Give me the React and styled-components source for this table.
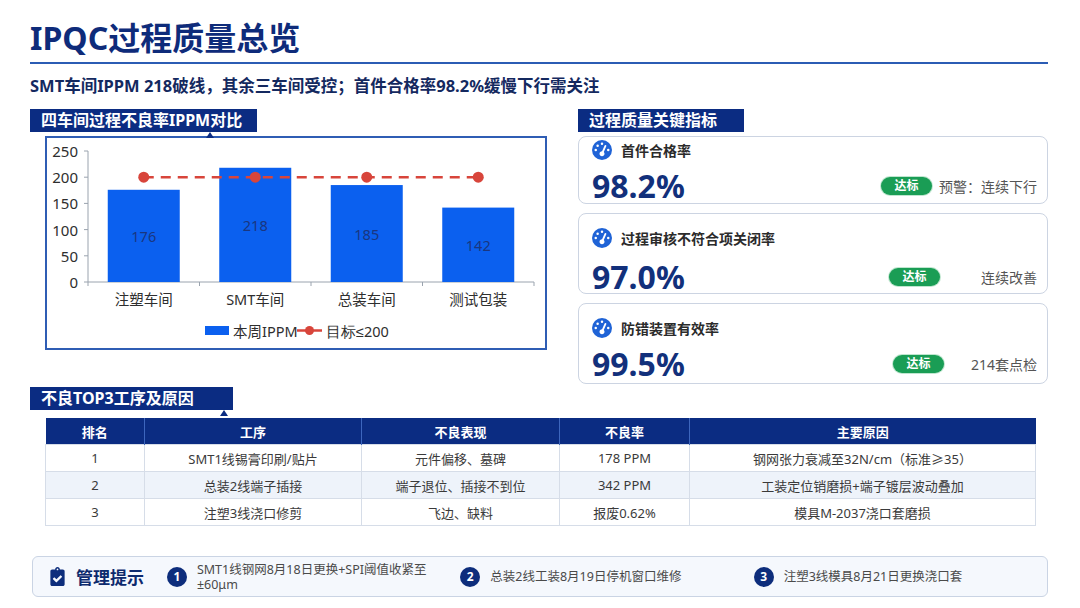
import styled, { createGlobalStyle } from "styled-components";
import { FaClipboardCheck } from "react-icons/fa";
import { FaGaugeHigh } from "react-icons/fa6";

const GlobalStyle = createGlobalStyle`
  html, body {
    margin: 0;
    padding: 0;
    background: #fff;
  }
  body {
    font-family: "Noto Sans", "Noto Sans CJK SC", sans-serif;
    color: #333;
  }
`;

const Page = styled.div`
  width: 1080px;
  height: 608px;
  box-sizing: border-box;
  padding: 18px 32px 0 30px;
  overflow: hidden;
`;

const Title = styled.h1`
  margin: 0;
  font-size: 32px;
  line-height: 40px;
  font-weight: 700;
  color: #0e2b7a;
`;

const Divider = styled.div`
  height: 2px;
  margin-top: 4px;
  background: #2b5cb4;
`;

const Subtitle = styled.p`
  margin: 11px 0 0;
  font-size: 16.5px;
  line-height: 22px;
  font-weight: 700;
  color: #14295f;
`;

const Main = styled.div`
  display: grid;
  grid-template-columns: 517px 470px;
  column-gap: 31px;
  margin-top: 12px;
`;

const Column = styled.div`
  display: flex;
  flex-direction: column;
`;

const SectionTitle = styled.div`
  position: relative;
  z-index: 1;
  box-sizing: border-box;
  width: ${(p) => p.$w}px;
  height: 23px;
  padding-left: 11px;
  background: #0b2c82;
  color: #fff;
  font-size: 16px;
  line-height: 23px;
  font-weight: 700;
  &::after {
    content: "";
    position: absolute;
    right: ${(p) => p.$notchRight || 5}px;
    bottom: -6px;
    border-left: 4px solid transparent;
    border-right: 4px solid transparent;
    border-bottom: 6px solid #0b2c82;
    display: ${(p) => (p.$notch ? "block" : "none")};
  }
`;

const ChartBox = styled.div`
  box-sizing: border-box;
  width: 502px;
  height: 214px;
  margin: 4px 0 0 15px;
  border: 2px solid #2f5db4;
`;

const ChartSvg = styled.svg`
  display: block;
  font-family: inherit;
  text {
    font-size: 14.5px;
    fill: #2e2e2e;
  }
  .axis {
    font-size: 15px;
  }
  .val {
    fill: #1a3680;
  }
`;

const Cards = styled.div`
  display: flex;
  flex-direction: column;
  gap: 9px;
  margin-top: 4px;
`;

const Card = styled.div`
  box-sizing: border-box;
  height: ${(p) => p.$h}px;
  padding: ${(p) => p.$pt}px 10px 0 13px;
  border: 1.5px solid #ccd4e2;
  border-radius: 8px;
  display: flex;
  flex-direction: column;
`;

const CardHead = styled.div`
  display: flex;
  align-items: center;
  gap: 9px;
  height: 20px;
  font-size: 14px;
  font-weight: 700;
  color: #2b2b2b;
  svg {
    color: #1f63d6;
  }
`;

const ValueRow = styled.div`
  display: flex;
  align-items: center;
  margin-top: ${(p) => p.$mt}px;
`;

const Value = styled.div`
  flex: 1;
  font-size: 32px;
  line-height: 36px;
  font-weight: 700;
  color: #12307b;
`;

const Badge = styled.span`
  width: 51px;
  height: 18px;
  border-radius: 9px;
  background: #1a9d55;
  box-shadow: 0 0 0 1px #bfe6cf;
  color: #fff;
  font-size: 12px;
  line-height: 18px;
  font-weight: 700;
  text-align: center;
`;

const Note = styled.span`
  width: ${(p) => p.$w}px;
  text-align: right;
  font-size: 14px;
  color: #555;
`;

const TableSection = styled.div`
  margin-top: 3px;
`;

const Table = styled.table`
  width: 990px;
  margin: 8px 0 0 15px;
  border-collapse: collapse;
  table-layout: fixed;
  font-size: 13px;
  th {
    height: 26px;
    padding: 0;
    background: #0b2c82;
    color: #fff;
    font-weight: 700;
    border-left: 1px solid #3d66bd;
  }
  th:first-child {
    border-left: none;
  }
  td {
    height: 26px;
    padding: 0;
    text-align: center;
    color: #3a3a3a;
    border: 1px solid #d6dde8;
  }
  tbody tr:nth-child(2) td {
    background: #eef3fa;
  }
`;

const TipBar = styled.div`
  box-sizing: border-box;
  height: 41px;
  margin: 30px 0 0 2px;
  padding-left: 15px;
  border: 1px solid #cad4e4;
  border-radius: 6px;
  background: #f5f8fd;
  display: flex;
  align-items: center;
`;

const TipLead = styled.div`
  width: 120px;
  display: flex;
  align-items: center;
  gap: 9px;
  font-size: 17px;
  font-weight: 700;
  color: #0d2a6e;
  svg {
    color: #0d2d7c;
  }
`;

const Tip = styled.div`
  width: 296px;
  display: flex;
  align-items: center;
  gap: 10px;
`;

const TipNum = styled.span`
  flex: none;
  width: 20px;
  height: 20px;
  border-radius: 50%;
  background: #0d2d7c;
  color: #fff;
  font-size: 12px;
  font-weight: 700;
  line-height: 20px;
  text-align: center;
`;

const TipText = styled.span`
  font-size: 12.5px;
  line-height: 15px;
  color: #4a4a4a;
`;

const chartData = [
  { name: "注塑车间", v: 176 },
  { name: "SMT车间", v: 218 },
  { name: "总装车间", v: 185 },
  { name: "测试包装", v: 142 },
];

const X0 = 41;
const X1 = 487;
const Y0 = 144;
const K = 131 / 250;
const CW = (X1 - X0) / 4;
const BAR = 72;

const Chart = () => {
  const cx = (i) => X0 + i * CW + CW / 2;
  const ty = Y0 - 200 * K;
  return (
    <ChartSvg width="498" height="210" viewBox="0 0 498 210">
      {[0, 50, 100, 150, 200, 250].map((t) => (
        <g key={t}>
          <line x1={37} x2={X0} y1={Y0 - t * K} y2={Y0 - t * K} stroke="#9aa3ae" />
          <text className="axis" x={31} y={Y0 - t * K} textAnchor="end" dominantBaseline="central">
            {t}
          </text>
        </g>
      ))}
      <line x1={X0} x2={X0} y1={Y0} y2={Y0 - 250 * K} stroke="#9aa3ae" />
      <line x1={X0} x2={X1} y1={Y0} y2={Y0} stroke="#9aa3ae" />
      {[0, 1, 2, 3, 4].map((i) => (
        <line key={i} x1={X0 + i * CW} x2={X0 + i * CW} y1={Y0} y2={Y0 + 4} stroke="#9aa3ae" />
      ))}
      {chartData.map((d, i) => (
        <g key={d.name}>
          <rect x={cx(i) - BAR / 2} y={Y0 - d.v * K} width={BAR} height={d.v * K} fill="#0b60ef" />
          <text className="val" x={cx(i)} y={Y0 - (d.v * K) / 2} textAnchor="middle" dominantBaseline="central">
            {d.v}
          </text>
          <text x={cx(i)} y={161} textAnchor="middle" dominantBaseline="central">
            {d.name}
          </text>
        </g>
      ))}
      <line x1={cx(0)} x2={cx(3)} y1={ty} y2={ty} stroke="#d8453b" strokeWidth="2.5" strokeDasharray="10 7" />
      {chartData.map((d, i) => (
        <circle key={d.name} cx={cx(i)} cy={ty} r="5.5" fill="#d8453b" />
      ))}
      <rect x={158} y={188} width={24} height={9} fill="#0b60ef" />
      <text x={186} y={192.5} dominantBaseline="central">本周IPPM</text>
      <line x1={250} x2={275} y1={192.5} y2={192.5} stroke="#d8453b" strokeWidth="2.5" />
      <circle cx={262.5} cy={192.5} r="4.5" fill="#d8453b" />
      <text x={279} y={192.5} dominantBaseline="central" style={{ fontFamily: '"Noto Sans", sans-serif' }}>
        目标≤200
      </text>
    </ChartSvg>
  );
};

const kpis = [
  { label: "首件合格率", value: "98.2%", note: "预警：连续下行", noteW: 105, h: 68, pt: 3, mt: 8 },
  { label: "过程审核不符合项关闭率", value: "97.0%", note: "连续改善", noteW: 97, h: 81, pt: 14, mt: 11 },
  { label: "防错装置有效率", value: "99.5%", note: "214套点检", noteW: 93, h: 81, pt: 14, mt: 8 },
];

const rows = [
  ["1", "SMT1线锡膏印刷/贴片", "元件偏移、墓碑", "178 PPM", "钢网张力衰减至32N/cm（标准≥35）"],
  ["2", "总装2线端子插接", "端子退位、插接不到位", "342 PPM", "工装定位销磨损+端子镀层波动叠加"],
  ["3", "注塑3线浇口修剪", "飞边、缺料", "报废0.62%", "模具M-2037浇口套磨损"],
];

const App = () => {
  return (
    <Page>
      <GlobalStyle />
      <Title>IPQC过程质量总览</Title>
      <Divider />
      <Subtitle>SMT车间IPPM 218破线，其余三车间受控；首件合格率98.2%缓慢下行需关注</Subtitle>
      <Main>
        <Column>
          <SectionTitle $w={227} $notch $notchRight={43}>四车间过程不良率IPPM对比</SectionTitle>
          <ChartBox>
            <Chart />
          </ChartBox>
        </Column>
        <Column>
          <SectionTitle $w={166}>过程质量关键指标</SectionTitle>
          <Cards>
            {kpis.map((k) => (
              <Card key={k.label} $h={k.h} $pt={k.pt}>
                <CardHead>
                  <FaGaugeHigh size={20} />
                  {k.label}
                </CardHead>
                <ValueRow $mt={k.mt}>
                  <Value>{k.value}</Value>
                  <Badge>达标</Badge>
                  <Note $w={k.noteW}>{k.note}</Note>
                </ValueRow>
              </Card>
            ))}
          </Cards>
        </Column>
      </Main>
      <TableSection>
        <SectionTitle $w={203} $notch>不良TOP3工序及原因</SectionTitle>
        <Table>
          <colgroup>
            <col style={{ width: 99 }} />
            <col style={{ width: 217 }} />
            <col style={{ width: 198 }} />
            <col style={{ width: 130 }} />
            <col style={{ width: 346 }} />
          </colgroup>
          <thead>
            <tr>
              <th>排名</th>
              <th>工序</th>
              <th>不良表现</th>
              <th>不良率</th>
              <th>主要原因</th>
            </tr>
          </thead>
          <tbody>
            {rows.map((r) => (
              <tr key={r[0]}>
                {r.map((c, i) => (
                  <td key={i}>{c}</td>
                ))}
              </tr>
            ))}
          </tbody>
        </Table>
      </TableSection>
      <TipBar>
        <TipLead>
          <FaClipboardCheck size={19} />
          管理提示
        </TipLead>
        <Tip>
          <TipNum>1</TipNum>
          <TipText>
            SMT1线钢网8月18日更换+SPI阈值收紧至
            <br />
            ±60μm
          </TipText>
        </Tip>
        <Tip>
          <TipNum>2</TipNum>
          <TipText>总装2线工装8月19日停机窗口维修</TipText>
        </Tip>
        <Tip>
          <TipNum>3</TipNum>
          <TipText>注塑3线模具8月21日更换浇口套</TipText>
        </Tip>
      </TipBar>
    </Page>
  );
};

export default App;
